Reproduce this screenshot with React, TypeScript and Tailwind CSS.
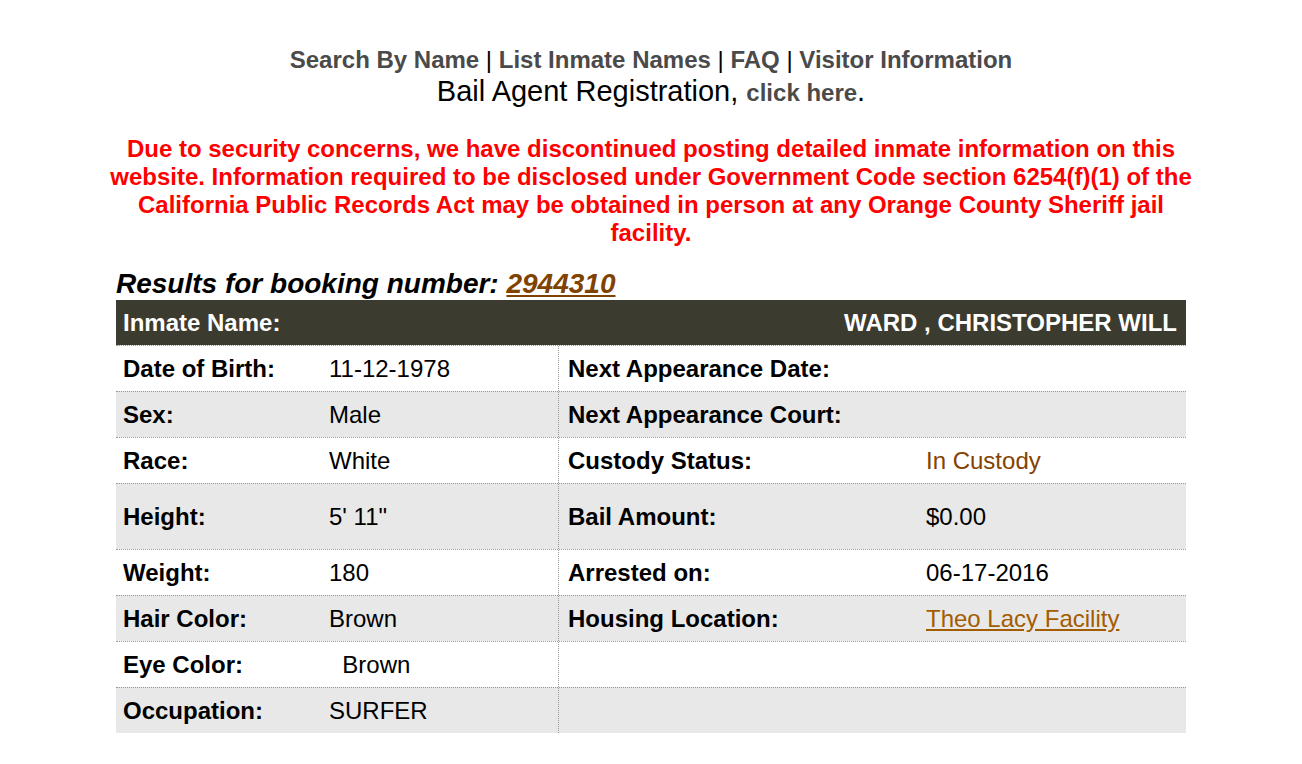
export default function App() {
  const rows: [string, string, string, React.ReactNode, string?][] = [
    ['Date of Birth:', '11-12-1978', 'Next Appearance Date:', ''],
    ['Sex:', 'Male', 'Next Appearance Court:', ''],
    ['Race:', 'White', 'Custody Status:', <span className="text-[#844200]">In Custody</span>],
    ['Height:', `5' 11"`, 'Bail Amount:', '$0.00', 'tall'],
    ['Weight:', '180', 'Arrested on:', '06-17-2016'],
    ['Hair Color:', 'Brown', 'Housing Location:', <a href="#" className="text-[#a35c00] underline">Theo Lacy Facility</a>],
    ['Eye Color:', '\u00a0\u00a0Brown', '', ''],
    ['Occupation:', 'SURFER', '', ''],
  ]

  return (
    <div className="min-h-screen bg-white font-['Liberation_Sans',Arial,sans-serif] text-black">
      <div className="w-[1070px] mx-auto pt-[45px]">
        <div className="text-center">
          <div className="text-[24px] font-bold leading-[30px] text-[#4a4a4a]">
            <a href="#">Search By Name</a>
            <span className="font-normal text-black"> | </span>
            <a href="#">List Inmate Names</a>
            <span className="font-normal text-black"> | </span>
            <a href="#">FAQ</a>
            <span className="font-normal text-black"> | </span>
            <a href="#">Visitor Information</a>
          </div>
          <div className="text-[29px] leading-[32px]">
            Bail Agent Registration, <a href="#" className="text-[24px] font-bold text-[#4a4a4a]">click here</a>.
          </div>
        </div>

        <p className="mt-[26px] -mx-[10px] text-center text-[24px] font-bold leading-[28px] text-[#ff0000]">
          Due to security concerns, we have discontinued posting detailed inmate information on this website.
          Information required to be disclosed under Government Code section 6254(f)(1) of the California Public
          Records Act may be obtained in person at any Orange County Sheriff jail facility.
        </p>

        <h2 className="mt-[21px] text-[28px] font-bold italic leading-[32px]">
          Results for booking number: <a href="#" className="text-[#7f4200] underline">2944310</a>
        </h2>

        <div className="flex items-center justify-between h-[45px] bg-[#3c3b2f] px-[7px] text-[24px] font-bold text-white">
          <span>Inmate Name:</span>
          <span className="pr-[2px]">WARD , CHRISTOPHER WILL</span>
        </div>

        {rows.map(([l1, v1, l2, v2, tall], i) => (
          <div
            key={i}
            className={`grid grid-cols-[206px_236px_360px_1fr] items-center border-t border-dotted border-[#999999] text-[24px] ${tall ? 'h-[66px]' : 'h-[46px]'} ${i % 2 ? 'bg-[#e8e8e8]' : 'bg-white'}`}
          >
            <div className="pl-[7px] font-bold">{l1}</div>
            <div className="pl-[7px] whitespace-pre">{v1}</div>
            <div className="h-full flex items-center border-l border-dotted border-[#999999] pl-[9px] font-bold">{l2}</div>
            <div className="pl-[8px]">{v2}</div>
          </div>
        ))}
      </div>
    </div>
  )
}
